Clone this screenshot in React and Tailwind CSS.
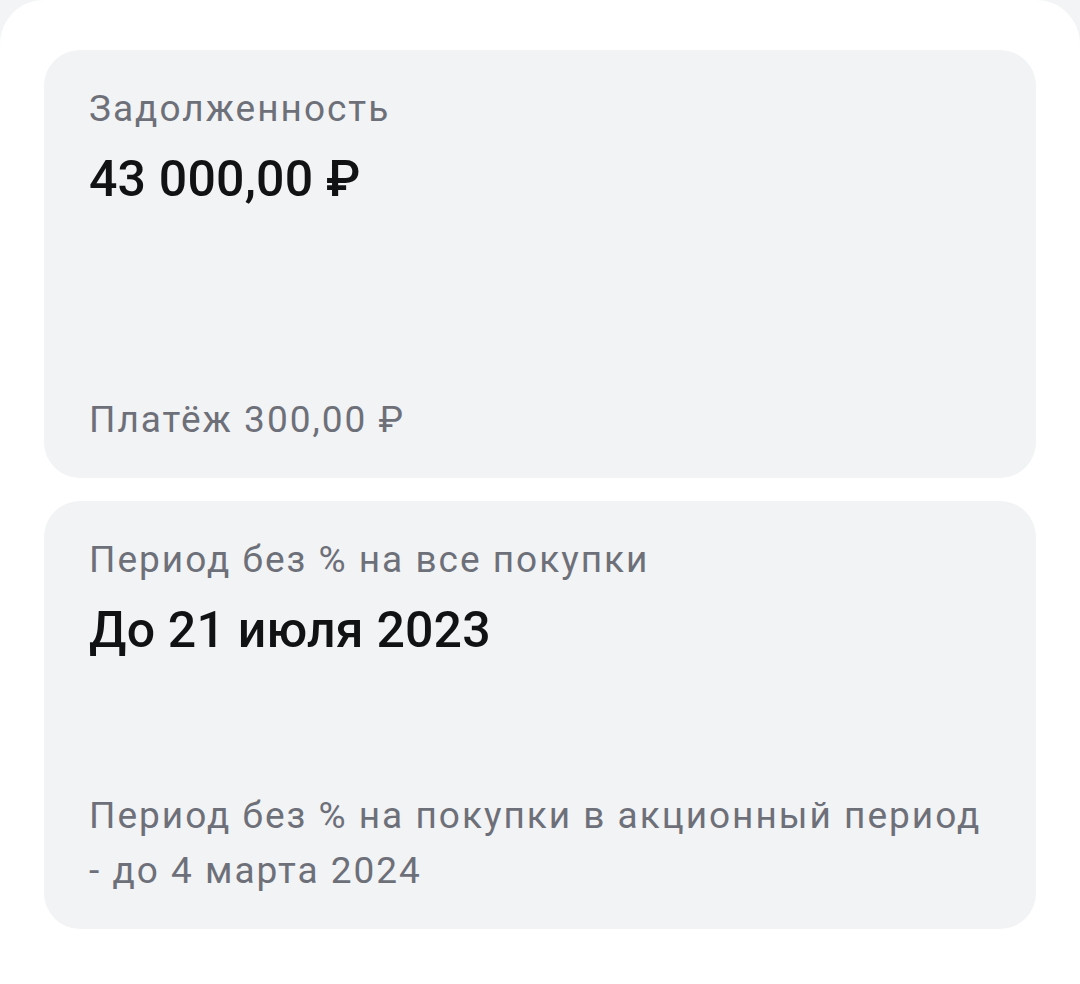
export default function App() {
  return (
    <div className="min-h-screen bg-[#f3f4f6]" style={{ fontFamily: 'Roboto, "Noto Sans", sans-serif' }}>
      <div className="min-h-[984px] bg-white rounded-t-[44px] pt-[50px] px-[44px] flex flex-col gap-[23px]">
        <div className="h-[428px] bg-[#f2f3f5] rounded-[36px] pl-[45px] pr-[40px] pt-[32px] pb-[31px] flex flex-col">
          <div className="text-[37px] leading-[54px] text-[#6e7079] tracking-[2px]">Задолженность</div>
          <div className="text-[50px] leading-[60px] font-medium text-[#111214] mt-[13px] tracking-[0.2px]">43 000,00 ₽</div>
          <div className="mt-auto text-[37px] leading-[54px] text-[#6e7079] tracking-[2px]">Платёж 300,00 ₽</div>
        </div>
        <div className="h-[428px] bg-[#f2f3f5] rounded-[36px] pl-[45px] pr-[40px] pt-[32px] pb-[31px] flex flex-col">
          <div className="text-[37px] leading-[54px] text-[#6e7079] tracking-[2px]">Период без % на все покупки</div>
          <div className="text-[50px] leading-[60px] font-medium text-[#111214] mt-[13px] tracking-[0.2px]">До 21 июля 2023</div>
          <div className="mt-auto text-[37px] leading-[55px] text-[#6e7079] tracking-[2px]">
            Период без % на покупки в акционный период
            <br />- до 4 марта 2024
          </div>
        </div>
      </div>
    </div>
  );
}
